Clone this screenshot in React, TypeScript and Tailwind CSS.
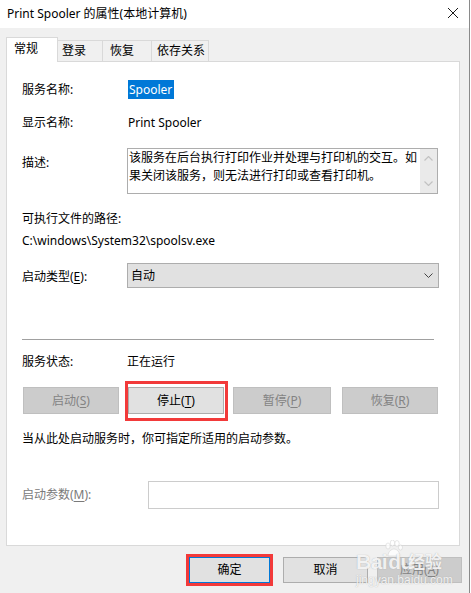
import React from "react";

const font = "font-['Noto_Sans','Noto_Sans_CJK_SC',sans-serif]";

function Btn({
  label,
  hot,
  rest,
  disabled,
  w,
  focused,
}: {
  label: string;
  hot?: string;
  rest?: string;
  disabled?: boolean;
  w: string;
  focused?: boolean;
}) {
  return (
    <div
      className={`${w} h-full flex items-center justify-center border text-[12px] ${
        disabled
          ? "bg-[#cccccc] border-[#bfbfbf] text-[#838383]"
          : focused
          ? "bg-[#e1e1e1] border-[#0078d7] text-black"
          : "bg-[#e1e1e1] border-[#adadad] text-black"
      }`}
    >
      <span>
        {label}
        {hot && (
          <>
            (<span className="underline underline-offset-2">{hot}</span>
            {rest ?? ")"}
          </>
        )}
      </span>
    </div>
  );
}

export default function App() {
  return (
    <div className={`w-[471px] h-[593px] flex bg-white overflow-hidden ${font} text-[12px] leading-[20px] text-black`}>
      <div className="w-[469px] h-full flex flex-col bg-[#f0f0f0] relative">
        {/* title bar */}
        <div className="h-[28px] bg-white flex items-center justify-between pl-[7px] pr-[10px]">
          <span>Print Spooler 的属性(本地计算机)</span>
          <svg width="12" height="12" viewBox="0 0 12 12" className="mt-[-2px]">
            <path d="M1 1 L11 11 M11 1 L1 11" stroke="#1a1a1a" strokeWidth="1" />
          </svg>
        </div>

        {/* tabs */}
        <div className="flex items-end pl-[6px] pt-[9px]">
          <div className="relative z-10 w-[52px] h-[25px] -mb-px bg-white border border-b-0 border-[#d9d9d9] pl-[7px] pt-[1px]">
            常规
          </div>
          <div className="w-[45px] h-[21px] border-t border-r border-[#d9d9d9] pl-[4px] leading-[19px]">登录</div>
          <div className="w-[49px] h-[21px] border-t border-r border-[#d9d9d9] pl-[7px] leading-[19px]">恢复</div>
          <div className="w-[57px] h-[21px] border-t border-r border-[#d9d9d9] pl-[5px] leading-[19px]">依存关系</div>
        </div>

        {/* panel */}
        <div className="ml-[6px] w-[454px] h-[485px] bg-white border border-[#d9d9d9] pl-[15px] flex flex-col">
          <div className="mt-[18px] h-[19px] flex items-center">
            <span className="w-[106px]">服务名称:</span>
            <span className="bg-[#0078d7] text-white h-[19px] leading-[19px] pl-[1px] pr-[2px]">Spooler</span>
          </div>

          <div className="mt-[14px] h-[20px] flex items-center">
            <span className="w-[106px]">显示名称:</span>
            <span>Print Spooler</span>
          </div>

          <div className="mt-[15px] h-[46px] flex">
            <span className="w-[105px] pt-[5px]">描述:</span>
            <div className="w-[311px] h-full border border-[#adadad] flex">
              <div className="flex-1 pl-[1px] leading-[18px]">
                <div>该服务在后台执行打印作业并处理与打印机的交互。如</div>
                <div>果关闭该服务，则无法进行打印或查看打印机。</div>
              </div>
              <div className="w-[17px] h-full bg-[#eaeaea] flex flex-col items-center justify-between py-[7px]">
                <svg width="9" height="5" viewBox="0 0 9 5">
                  <path d="M0.5 4.5 L4.5 0.5 L8.5 4.5" fill="none" stroke="#c2c2c2" strokeWidth="1.2" />
                </svg>
                <svg width="9" height="5" viewBox="0 0 9 5">
                  <path d="M0.5 0.5 L4.5 4.5 L8.5 0.5" fill="none" stroke="#c2c2c2" strokeWidth="1.2" />
                </svg>
              </div>
            </div>
          </div>

          <div className="mt-[15px] h-[20px] flex items-center">可执行文件的路径:</div>
          <div className="mt-[2px] h-[20px] flex items-center">C:\windows\System32\spoolsv.exe</div>

          <div className="mt-[12px] h-[25px] flex items-center">
            <span className="w-[105px] pt-[2px]">
              启动类型(<span className="underline underline-offset-2">E</span>):
            </span>
            <div className="w-[312px] h-full bg-[#e1e1e1] border border-[#adadad] flex items-center justify-between pl-[3px] pr-[5px]">
              <span>自动</span>
              <svg width="9" height="5" viewBox="0 0 9 5">
                <path d="M0.5 0.5 L4.5 4.5 L8.5 0.5" fill="none" stroke="#444" strokeWidth="1" />
              </svg>
            </div>
          </div>

          <div className="mt-[51px] h-px w-[412px] bg-[#a0a0a0]" />

          <div className="mt-[12px] h-[20px] flex items-center">
            <span className="w-[105px]">服务状态:</span>
            <span>正在运行</span>
          </div>

          <div className="mt-[15px] h-[27px] flex">
            <div className="ml-[1px]">
              <Btn label="启动" hot="S" disabled w="w-[96px]" />
            </div>
            <div className="ml-[9px] relative">
              <Btn label="停止" hot="T" w="w-[96px]" />
              <div className="absolute -top-[6px] -left-[3px] -right-[4px] -bottom-[7px] border-[3px] border-[#f23a3a]" />
            </div>
            <div className="ml-[9px]">
              <Btn label="暂停" hot="P" disabled w="w-[98px]" />
            </div>
            <div className="ml-[11px]">
              <Btn label="恢复" hot="R" disabled w="w-[96px]" />
            </div>
          </div>

          <div className="mt-[15px] h-[20px] flex items-center">当从此处启动服务时，你可指定所适用的启动参数。</div>

          <div className="mt-[32px] h-[28px] flex items-center">
            <span className="w-[126px] text-[#7a7a7a]">
              启动参数(<span className="underline underline-offset-2">M</span>):
            </span>
            <div className="w-[291px] h-full border border-[#cccccc] bg-white" />
          </div>
        </div>

        {/* bottom buttons */}
        <div className="mt-[8px] h-[32px] flex items-center pl-[186px]">
          <div className="w-[87px] h-[32px] border-[3px] border-[#f23a3a]">
            <Btn label="确定" w="w-full" focused />
          </div>
          <div className="ml-[10px] h-[26px]">
            <Btn label="取消" w="w-[85px]" />
          </div>
          <div className="ml-[9px] h-[26px]">
            <Btn label="应用" hot="A" disabled w="w-[85px]" />
          </div>
        </div>

        {/* baidu watermark */}
        <div className="absolute left-[354px] top-[538px] w-[95px] h-[52px] pointer-events-none text-white/85 [text-shadow:0_0_1px_rgba(120,120,120,0.6)]">
          <svg width="20" height="18" viewBox="0 0 20 18" className="absolute left-[30px] top-[2px] opacity-80">
            <ellipse cx="4" cy="6" rx="2.2" ry="3" fill="#ffffff" stroke="#cfcfcf" strokeWidth="0.6" />
            <ellipse cx="8.5" cy="3" rx="2.2" ry="3" fill="#ffffff" stroke="#cfcfcf" strokeWidth="0.6" />
            <ellipse cx="13" cy="3.5" rx="2.2" ry="3" fill="#ffffff" stroke="#cfcfcf" strokeWidth="0.6" />
            <ellipse cx="16.5" cy="7.5" rx="2" ry="2.6" fill="#ffffff" stroke="#cfcfcf" strokeWidth="0.6" />
            <path d="M4 16 C4 11 8 9 10 9 C13 9 16 12 15.5 16 Z" fill="#ffffff" stroke="#cfcfcf" strokeWidth="0.6" />
          </svg>
          <div className="absolute left-[2px] top-[12px] text-[21px] leading-[24px] font-bold font-['Liberation_Sans',sans-serif] tracking-[-0.5px]">
            Bai<span className="ml-[1px]">du</span>
          </div>
          <div className="absolute left-[54px] top-[13px] text-[17px] leading-[22px] font-bold">经验</div>
          <div className="absolute left-[2px] top-[35px] text-[12px] leading-[14px] font-['Liberation_Sans',sans-serif]">
            jingyan.baidu.com
          </div>
        </div>
      </div>
      <div className="w-px h-full bg-[#8a8a8a]" />
      <div className="w-px h-full bg-white" />
    </div>
  );
}
